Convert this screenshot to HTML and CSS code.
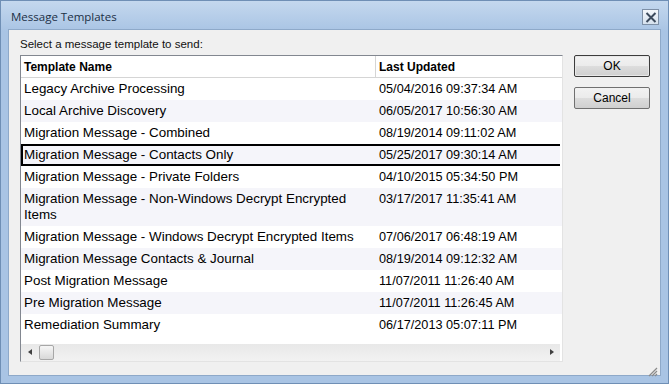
FILE: index.html
```html
<!DOCTYPE html>
<html lang="en">
<head>
<meta charset="UTF-8">
<title>Message Templates</title>
<link rel="stylesheet" href="styles.css">
</head>
<body>
<div class="window">
    <div class="titlebar">
        <span class="title">Message Templates</span>
        <span class="close-btn">
            <svg width="12" height="11" viewBox="0 0 12 11"><path d="M1.5 1 L10.5 10 M10.5 1 L1.5 10" stroke="#3c4a5c" stroke-width="2" fill="none"/></svg>
        </span>
    </div>
    <div class="client">
        <div class="left">
            <div class="prompt">Select a message template to send:</div>
            <div class="listbox">
                <div class="header">
                    <div class="hcell name-col">Template Name</div>
                    <div class="hcell date-col">Last Updated</div>
                </div>
                <div class="rows">
                    <div class="row"><div class="name-col">Legacy Archive Processing</div><div class="date-col">05/04/2016 09:37:34 AM</div></div>
                    <div class="row alt"><div class="name-col">Local Archive Discovery</div><div class="date-col">06/05/2017 10:56:30 AM</div></div>
                    <div class="row"><div class="name-col">Migration Message - Combined</div><div class="date-col">08/19/2014 09:11:02 AM</div></div>
                    <div class="row alt selected"><div class="name-col">Migration Message - Contacts Only</div><div class="date-col">05/25/2017 09:30:14 AM</div></div>
                    <div class="row"><div class="name-col">Migration Message - Private Folders</div><div class="date-col">04/10/2015 05:34:50 PM</div></div>
                    <div class="row alt"><div class="name-col">Migration Message - Non-Windows Decrypt Encrypted Items</div><div class="date-col">03/17/2017 11:35:41 AM</div></div>
                    <div class="row"><div class="name-col">Migration Message - Windows Decrypt Encrypted Items</div><div class="date-col">07/06/2017 06:48:19 AM</div></div>
                    <div class="row alt"><div class="name-col">Migration Message Contacts &amp; Journal</div><div class="date-col">08/19/2014 09:12:32 AM</div></div>
                    <div class="row"><div class="name-col">Post Migration Message</div><div class="date-col">11/07/2011 11:26:40 AM</div></div>
                    <div class="row alt"><div class="name-col">Pre Migration Message</div><div class="date-col">11/07/2011 11:26:45 AM</div></div>
                    <div class="row"><div class="name-col">Remediation Summary</div><div class="date-col">06/17/2013 05:07:11 PM</div></div>
                </div>
                <div class="hscroll">
                    <span class="arrow arrow-left"></span>
                    <span class="thumb"></span>
                    <span class="track"></span>
                    <span class="arrow arrow-right"></span>
                </div>
            </div>
        </div>
        <div class="buttons">
            <button class="btn default">OK</button>
            <button class="btn">Cancel</button>
        </div>
        <span class="grip">
            <svg width="10" height="10" viewBox="0 0 10 10"><path d="M9 1 L1 9 M9 4 L4 9 M9 7 L7 9" stroke="#8a8a8a" stroke-width="1.2" fill="none"/></svg>
        </span>
    </div>
</div>
</body>
</html>
```

FILE: styles.css
```css
html, body {
    margin: 0;
    padding: 0;
}
body {
    width: 669px;
    height: 384px;
    overflow: hidden;
    font-family: "Liberation Sans", Arial, sans-serif;
    background: #a9c4e4;
}
.window {
    width: 669px;
    height: 384px;
    box-sizing: border-box;
    border: 1px solid #6f8fb5;
    background: linear-gradient(to bottom, #c4d8ee, #a9c4e4 30px, #a9c4e4);
    padding: 0 7px 7px 7px;
    display: flex;
    flex-direction: column;
}
.titlebar {
    height: 28px;
    display: flex;
    align-items: center;
    justify-content: space-between;
    padding-left: 3px;
}
.title {
    font-family: "Open Sans", "Liberation Sans", sans-serif;
    font-size: 11.5px;
    color: #1b2f45;
    margin-top: 2px;
}
.close-btn {
    width: 17px;
    height: 16px;
    box-sizing: border-box;
    border: 1px solid #7d8fa6;
    background: linear-gradient(to bottom, #f4f7fb, #d5e1ee);
    display: flex;
    align-items: center;
    justify-content: center;
    margin-right: 2px;
    margin-top: 4px;
}
.client {
    flex: 1;
    background: #f0f0f0;
    border: 1px solid #8ea9c9;
    display: flex;
    padding: 0 0 13px 11px;
    position: relative;
}
.left {
    display: flex;
    flex-direction: column;
}
.prompt {
    font-size: 11.5px;
    color: #111;
    margin-top: 8px;
    height: 17px;
}
.listbox {
    width: 543px;
    height: 307px;
    box-sizing: border-box;
    border: 1px solid #828790;
    border-right-color: #e3e3e3;
    border-bottom-color: #e3e3e3;
    background: #fff;
    display: flex;
    flex-direction: column;
}
.header {
    display: flex;
    height: 21px;
    border-bottom: 1px solid #d5d5d5;
}
.header .hcell {
    font-weight: bold;
    font-size: 12px;
    color: #000;
    display: flex;
    align-items: center;
    padding-top: 1px;
}
.header .name-col {
    border-right: 1px solid #d5d5d5;
}
.name-col {
    width: 355px;
    padding-left: 3px;
    box-sizing: border-box;
    flex: none;
}
.date-col {
    padding-left: 3px;
    flex: 1;
}
.row .date-col {
    font-size: 12.7px;
}
.rows {
    flex: 1;
}
.row {
    display: flex;
    font-size: 13.4px;
    color: #000;
    line-height: 16px;
    padding: 3px 0;
    box-sizing: border-box;
    min-height: 22px;
    background: #fff;
}
.row.alt {
    background: #f5f5fa;
}
.row .name-col {
    padding-right: 20px;
}
.row.selected {
    border: 2px solid #000;
    border-right: none;
    padding: 1px 0 1px 0;
    margin-right: 2px;
}
.row.selected .name-col {
    padding-left: 1px;
    width: 353px;
}
.hscroll {
    height: 17px;
    display: flex;
    align-items: center;
    background: linear-gradient(to bottom, #e8e8e8, #f2f2f2);
    margin-right: 2px;
}
.arrow {
    width: 18px;
    height: 17px;
    position: relative;
    flex: none;
}
.arrow-left::after {
    content: "";
    position: absolute;
    left: 7px;
    top: 5px;
    border-top: 3px solid transparent;
    border-bottom: 3px solid transparent;
    border-right: 4px solid #404040;
}
.arrow-right::after {
    content: "";
    position: absolute;
    left: 8px;
    top: 5px;
    border-top: 3px solid transparent;
    border-bottom: 3px solid transparent;
    border-left: 4px solid #404040;
}
.thumb {
    width: 15px;
    height: 15px;
    box-sizing: border-box;
    border: 1px solid #a7a7a7;
    border-radius: 2px;
    background: linear-gradient(to bottom, #f6f6f6, #d8d8d8);
    flex: none;
}
.track {
    flex: 1;
}
.buttons {
    display: flex;
    flex-direction: column;
    gap: 10px;
    margin-left: 11px;
    margin-top: 25px;
}
.btn {
    width: 76px;
    height: 22px;
    font-family: "Liberation Sans", Arial, sans-serif;
    font-size: 12px;
    color: #000;
    border: 1px solid #707070;
    border-radius: 2px;
    background: linear-gradient(to bottom, #f2f2f2 0%, #ebebeb 50%, #dddddd 51%, #cfcfcf 100%);
    padding: 0;
}
.btn.default {
    border-color: #3c3c3c;
    box-shadow: inset 0 0 0 1px #e8e8e8;
}
.grip {
    position: absolute;
    right: 2px;
    bottom: 2px;
    width: 10px;
    height: 10px;
}
```
